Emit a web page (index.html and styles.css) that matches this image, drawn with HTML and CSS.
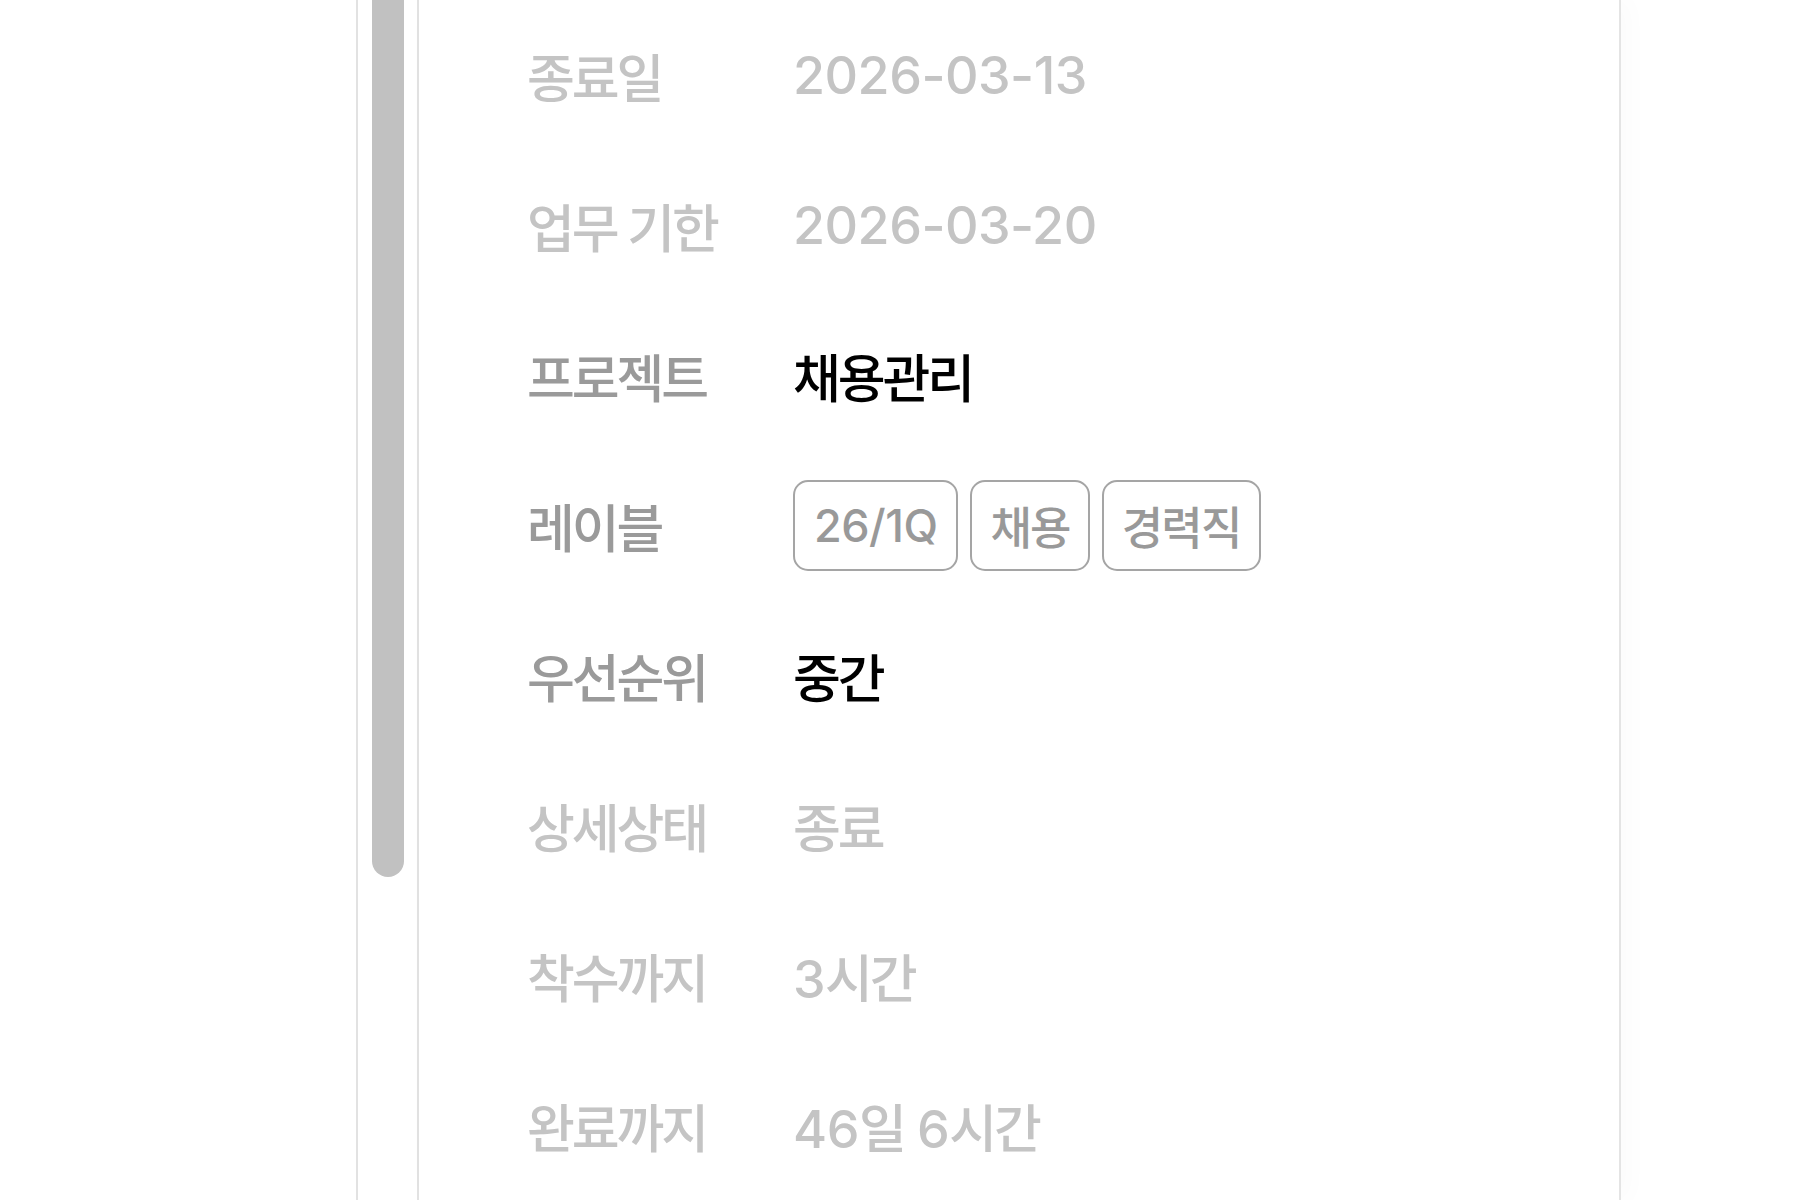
FILE: index.html
```html
<!DOCTYPE html>
<html lang="ko">
<head>
<meta charset="utf-8">
<link rel="stylesheet" href="styles.css">
</head>
<body>
<div class="page">
  <div class="list-edge"></div>
  <div class="scroll-track"><div class="thumb"></div></div>
  <div class="panel">
    <div class="row muted"><div class="label ko">종료일</div><div class="value">2026-03-13</div></div>
    <div class="row muted"><div class="label ko">업무 기한</div><div class="value">2026-03-20</div></div>
    <div class="row active"><div class="label ko">프로젝트</div><div class="value ko">채용관리</div></div>
    <div class="row active"><div class="label ko">레이블</div>
      <div class="value tags">
        <span class="tag">26/1Q</span>
        <span class="tag ko">채용</span>
        <span class="tag ko">경력직</span>
      </div>
    </div>
    <div class="row active"><div class="label ko">우선순위</div><div class="value ko">중간</div></div>
    <div class="row muted"><div class="label ko">상세상태</div><div class="value ko">종료</div></div>
    <div class="row muted"><div class="label ko">착수까지</div><div class="value">3<span class="ko">시간</span></div></div>
    <div class="row muted"><div class="label ko">완료까지</div><div class="value">46<span class="ko">일</span> 6<span class="ko">시간</span></div></div>
  </div>
</div>
</body>
</html>
```

FILE: styles.css
```css
html, body {
  margin: 0;
  padding: 0;
  background: #ffffff;
}

body {
  font-family: "Inter", "Noto Sans CJK KR", sans-serif;
  font-size: 52px;
  font-weight: 500;
  letter-spacing: -0.5px;
  overflow: hidden;
  height: 1200px;
}

.page {
  display: flex;
  height: 1200px;
}

.list-edge {
  width: 356px;
  flex: none;
  border-right: 2px solid #e2e2e2;
}

.scroll-track {
  width: 59px;
  flex: none;
  border-right: 2px solid #e2e2e2;
}

.thumb {
  margin-left: 14px;
  width: 32px;
  height: 877px;
  background: #c1c1c1;
  border-radius: 0 0 16px 16px;
}

.panel {
  width: 1200px;
  flex: none;
  border-right: 2px solid #e4e4e4;
  box-shadow: 8px 0 24px rgba(0, 0, 0, 0.02);
}

.row {
  display: flex;
  align-items: center;
  height: 150px;
  padding-left: 108px;
}

.label {
  width: 266px;
  flex: none;
  white-space: nowrap;
}

.value {
  white-space: nowrap;
}

.ko {
  letter-spacing: -0.06em;
}

.muted .label,
.muted .value {
  color: #c4c4c4;
}

.active .label {
  color: #9a9a9a;
}

.active .value {
  color: #000000;
}

.tags {
  display: flex;
  gap: 12px;
}

.tag {
  display: flex;
  align-items: center;
  height: 87px;
  padding: 0 19px;
  border: 2px solid #a5a5a5;
  border-radius: 15px;
  font-size: 45px;
  color: #999999;
}

.tag.ko {
  padding: 0 18px;
  letter-spacing: -0.04em;
}
```
